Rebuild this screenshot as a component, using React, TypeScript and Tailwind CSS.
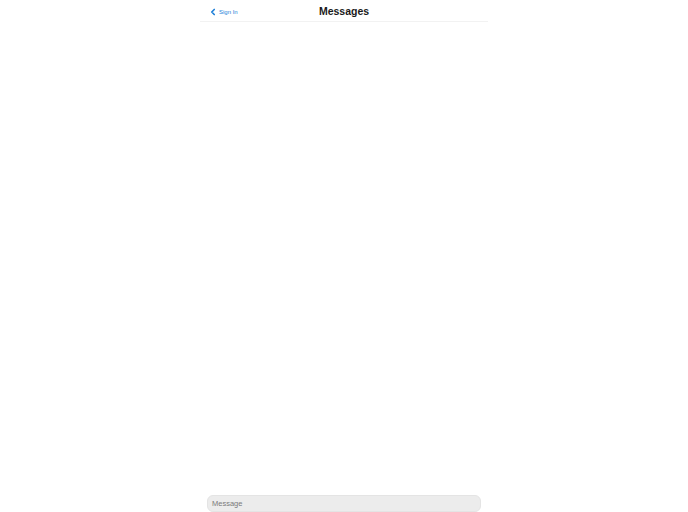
import { ChevronLeft } from 'lucide-react'

export default function App() {
  return (
    <div className="flex h-[512px] w-full justify-center bg-white font-['Liberation_Sans',Arial,sans-serif]">
      <div className="flex w-[288px] flex-col">
        <header className="relative flex h-[22px] items-center justify-center border-b border-[#f2f2f2] pt-[2px]">
          <button type="button" className="absolute left-[8px] top-[7px] flex items-center text-[#1e7fd8]">
            <ChevronLeft className="h-[10px] w-[10px]" strokeWidth={4} />
            <span className="ml-[1px] text-[6px] leading-none">Sign In</span>
          </button>
          <h1 className="text-[10.5px] font-bold leading-none text-[#1a1a1a]">Messages</h1>
        </header>

        <main className="flex-1" />

        <div className="px-[7px] pt-[2px] pb-0">
          <div className="flex h-[17px] items-center rounded-[6px] border border-[#e4e4e4] bg-[#ececec] px-[4px] pt-[1px] text-[7.5px] text-[#7a7a7a]">
            Message
          </div>
        </div>
      </div>
    </div>
  )
}
